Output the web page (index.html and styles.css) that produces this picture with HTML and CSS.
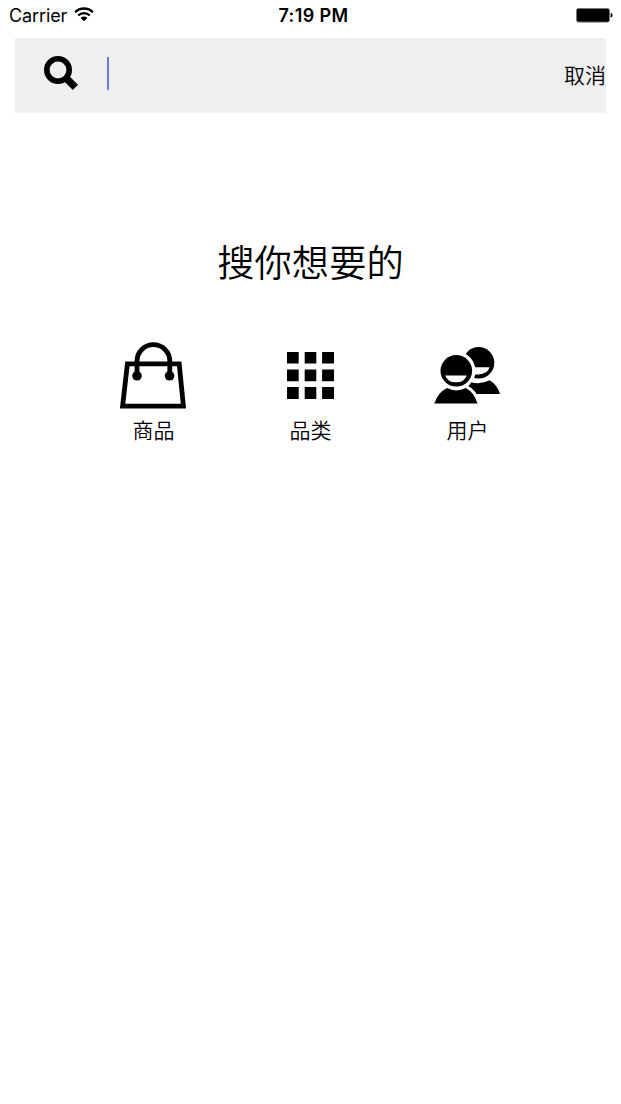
FILE: index.html
```html
<!DOCTYPE html>
<html lang="zh-CN">
<head>
<meta charset="utf-8">
<title>搜索</title>
<link rel="stylesheet" href="styles.css">
</head>
<body>
<header class="status">
  <div class="carrier"><span>Carrier</span>
    <svg class="wifi" width="20" height="15" viewBox="0 0 20 15"><g fill="none" stroke="#000" stroke-width="2.3"><path d="M1.1 5.2a12.6 12.6 0 0 1 17.8 0"/><path d="M4.2 8.5a8.2 8.2 0 0 1 11.6 0"/></g><path d="M6.6 10.9a4.9 4.9 0 0 1 6.8 0L10 14.2Z"/></svg>
  </div>
  <div class="time">7:19 PM</div>
  <div class="power"><svg width="38" height="15" viewBox="0 0 38 15"><rect x="1.5" y=".5" width="33" height="13.6" rx="2" fill="#000" stroke="#777"/><path d="M35.6 4.8q2 .6 2 2.5t-2 2.5z"/></svg></div>
</header>
<div class="search">
  <svg class="lens" width="36" height="36" viewBox="0 0 36 36"><circle cx="15" cy="15" r="11.2" fill="none" stroke="#000" stroke-width="5.6"/><path d="M22.5 22.5 32.4 32.4" stroke="#000" stroke-width="7.4"/></svg>
  <span class="caret"></span>
  <span class="cancel">取消</span>
</div>
<main>
  <h1>搜你想要的</h1>
  <nav class="kinds">
    <div class="kind">
      <svg width="82" height="77" viewBox="1 -.3 82 77"><g fill="none" stroke="#000" stroke-width="4.8"><path d="M15.4 28.6H67.2L71.4 70.8H10.6Z"/><path d="M25 40V25.8a16.4 16.4 0 0 1 32.8 0V40"/></g><circle cx="25" cy="40.5" r="4.8"/><circle cx="57.6" cy="40.5" r="4.8"/></svg>
      <span>商品</span>
    </div>
    <div class="kind">
      <svg width="82" height="77" viewBox="0 0 82 77"><path d="M17 16.9h11.7v11.7H17zM34.7 16.9h11.6v11.7H34.7zM52.1 16.9h11.9v11.7H52.1zM17 34.5h11.7v11.7H17zM34.7 34.5h11.6v11.7H34.7zM52.1 34.5h11.9v11.7H52.1zM17 52h11.7v11.9H17zM34.7 52h11.6v11.9H34.7zM52.1 52h11.9v11.9H52.1z"/></svg>
      <span>品类</span>
    </div>
    <div class="kind">
      <svg width="82" height="77" viewBox="0 0 82 77"><path d="M34 59.1H73Q70.2 49.5 62.5 45.2Q51.5 51 40 45.5Z"/><circle cx="51.6" cy="27.8" r="15.7"/><path d="M39 32.3H62.5Q60.8 39.2 51.5 39.4H39Z" fill="#fff"/><g stroke="#fff" stroke-width="6.4" fill="#fff"><circle cx="29.3" cy="35.8" r="16"/><path d="M7.3 68.6Q11 57.5 20 53.1Q29 57.5 38.7 53.1Q47.2 57.5 50.5 68.6Z"/></g><circle cx="29.3" cy="35.8" r="15.8"/><path d="M7.3 68.6Q11 57.5 20 53.1Q29.3 57.8 38.7 53.1Q47.2 57.5 50.5 68.6Z"/><path d="M18.2 40.4H39.8Q37.5 47.2 29 47.2T18.2 40.4Z" fill="#fff"/></svg>
      <span>用户</span>
    </div>
  </nav>
</main>
</body>
</html>
```
FILE: styles.css
```css
* { box-sizing: border-box; }
body { margin: 0; background: #fff; color: #000; font-family: Inter, "Noto Sans CJK SC", sans-serif; }
svg { display: block; flex: none; }
.status { height: 38px; padding: 4px 8px 0 9px; display: grid; grid-template-columns: 1fr auto 1fr; align-items: start; font-size: 18px; line-height: 24px; }
.carrier { display: flex; gap: 7px; letter-spacing: -.1px; }
.wifi { margin-top: 3px; }
.time { font-weight: 600; letter-spacing: .4px; padding-left: 5px; }
.power { display: flex; justify-content: flex-end; padding-top: 4px; }
.search { height: 75px; margin: 0 15px; background: #efefef; display: flex; align-items: center; }
.lens { margin: -5px 0 0 28px; }
.caret { width: 2px; height: 33px; margin: -4px 0 0 28px; background: #6b80d4; }
.cancel { margin-left: auto; font-size: 21px; line-height: 30px; font-weight: 350; }
main { padding-top: 123px; }
h1 { margin: 0; font-size: 37.3px; line-height: 56px; font-weight: 350; text-align: center; }
.kinds { width: 471px; margin: 43px 0 0 75px; display: grid; grid-template-columns: repeat(3, 1fr); }
.kind { display: flex; flex-direction: column; align-items: center; font-size: 21px; line-height: 30px; font-weight: 350; }
.kind span { margin-top: 4px; }
```
